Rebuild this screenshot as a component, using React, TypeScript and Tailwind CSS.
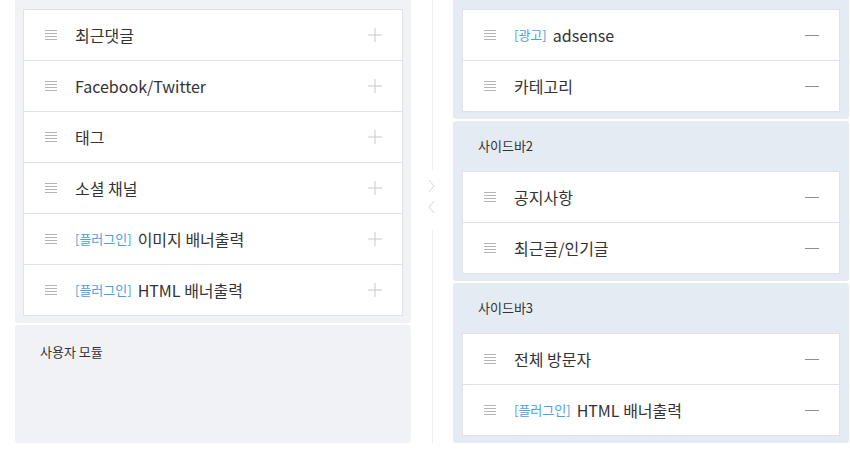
const font = { fontFamily: '"Noto Sans CJK KR", "Noto Sans", sans-serif' };

type Item = { tag?: string; label: string };

const leftItems: Item[] = [
  { label: "최근댓글" },
  { label: "Facebook/Twitter" },
  { label: "태그" },
  { label: "소셜 채널" },
  { tag: "[플러그인]", label: "이미지 배너출력" },
  { tag: "[플러그인]", label: "HTML 배너출력" },
];

const sidebars: { title?: string; items: Item[] }[] = [
  { items: [{ tag: "[광고]", label: "adsense" }, { label: "카테고리" }] },
  { title: "사이드바2", items: [{ label: "공지사항" }, { label: "최근글/인기글" }] },
  { title: "사이드바3", items: [{ label: "전체 방문자" }, { tag: "[플러그인]", label: "HTML 배너출력" }] },
];

function Handle() {
  return (
    <svg width="12" height="11" viewBox="0 0 12 11" className="shrink-0">
      {[1, 4, 7, 10].map((y) => (
        <line key={y} x1="0" x2="12" y1={y - 0.5} y2={y - 0.5} stroke="#b4b4b4" strokeWidth="1" />
      ))}
    </svg>
  );
}

function Plus() {
  return (
    <svg width="14" height="14" viewBox="0 0 14 14">
      <line x1="7" x2="7" y1="0" y2="14" stroke="#c8c8c8" strokeWidth="1" />
      <line x1="0" x2="14" y1="7" y2="7" stroke="#c8c8c8" strokeWidth="1" />
    </svg>
  );
}

function Minus() {
  return (
    <svg width="14" height="14" viewBox="0 0 14 14">
      <line x1="0" x2="14" y1="7.5" y2="7.5" stroke="#8b9099" strokeWidth="1" />
    </svg>
  );
}

function Row({ item, action }: { item: Item; action: "plus" | "minus" }) {
  return (
    <div className="box-content flex h-[50px] items-center pl-[21px] pr-[20px]">
      <Handle />
      <div className="ml-[18px] flex flex-1 items-center text-[16px] text-[#333]">
        {item.tag && <span className="mr-[6px] text-[13px] text-[#4a9fe6]">{item.tag}</span>}
        <span>{item.label}</span>
      </div>
      {action === "plus" ? <Plus /> : <Minus />}
    </div>
  );
}

function Card({ items, action }: { items: Item[]; action: "plus" | "minus" }) {
  return (
    <div className="border border-[#dfe2ea] bg-white divide-y divide-[#dfe2ea]">
      {items.map((it, i) => (
        <Row key={i} item={it} action={action} />
      ))}
    </div>
  );
}

export default function App() {
  return (
    <div className="flex h-[465px] w-[850px] bg-white pl-[15px]" style={font}>
      {/* 사용 가능한 모듈 */}
      <div className="flex h-[443px] w-[396px] flex-col gap-[2px]">
        <div className="rounded-b-[3px] bg-[#f1f2f6] px-[8px] pb-[7px] pt-[9px]">
          <Card items={leftItems} action="plus" />
        </div>
        <div className="flex-1 rounded-[3px] bg-[#f1f2f6] pl-[25px] pt-[17px] text-[13px] text-[#333]">
          사용자 모듈
        </div>
      </div>

      {/* 가운데 구분선 */}
      <div className="flex h-[443px] w-[42px] flex-col items-center">
        <div className="h-[170px] w-px bg-[#eeeff2]" />
        <svg width="10" height="44" viewBox="0 0 10 44" className="my-[8px]">
          <polyline points="2,2 7,8 2,14" fill="none" stroke="#d4d7dd" strokeWidth="1" />
          <polyline points="7,23 2,29 7,35" fill="none" stroke="#d4d7dd" strokeWidth="1" />
        </svg>
        <div className="w-px flex-1 bg-[#eeeff2]" />
      </div>

      {/* 사이드바 */}
      <div className="flex h-[443px] w-[396px] flex-col gap-[2px]">
        {sidebars.map((sb, i) => (
          <div
            key={i}
            className={`bg-[#e5ebf2] pb-[7px] pl-[9px] pr-[9px] ${i === 0 ? "rounded-b-[3px] pt-[9px]" : "rounded-[3px]"}`}
          >
            {sb.title && (
              <div className="flex h-[50px] items-center pl-[16px] text-[13px] text-[#333]">{sb.title}</div>
            )}
            <Card items={sb.items} action="minus" />
          </div>
        ))}
      </div>
    </div>
  );
}
